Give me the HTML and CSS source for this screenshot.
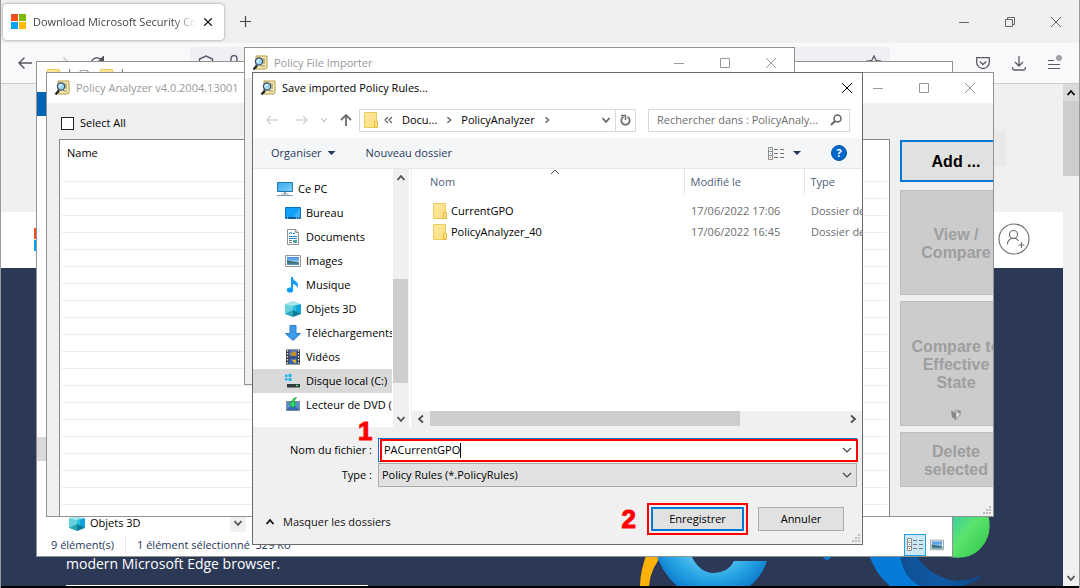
FILE: index.html
```html
<!DOCTYPE html>
<html lang="fr">
<head>
<meta charset="utf-8">
<meta name="viewport" content="width=device-width, initial-scale=1">
<title>Save imported Policy Rules</title>
<link rel="stylesheet" href="styles.css">
</head>
<body>
<svg class="defs" aria-hidden="true">
  <defs>
    <linearGradient id="g-screen" x1="0" y1="0" x2="1" y2="1"><stop offset="0" stop-color="#35a9ee"/><stop offset="1" stop-color="#7fd0fb"/></linearGradient>
    <linearGradient id="g-folder" x1="0" y1="0" x2="1" y2="1"><stop offset="0" stop-color="#ffe9a2"/><stop offset="1" stop-color="#fbdd7c"/></linearGradient>
    <linearGradient id="g-photo" x1="0" y1="0" x2="0" y2="1"><stop offset="0" stop-color="#3f8ee0"/><stop offset="1" stop-color="#d3ecfb"/></linearGradient>
    <symbol id="i-app" viewBox="0 0 16 16">
      <path d="M4 1h11v11q0 2-2 2H4z" fill="#f3eab8" stroke="#b59a3c"/>
      <path d="M10 4h3M11 6h2M11 8h2M9 11h4" stroke="#8a8460"/>
      <path d="M1.500 14.500l3.500-4" stroke="#222" stroke-width="2.200"/>
      <circle cx="7" cy="6.500" r="3.600" fill="#9fd8f5" stroke="#3b4a63" stroke-width="1.200"/>
      <path d="M5.500 7q0-2 2-2.500" stroke="#fff" fill="none"/>
    </symbol>
    <symbol id="i-min" viewBox="0 0 10 10"><path d="M0 5.500h10" stroke="currentColor" fill="none"/></symbol>
    <symbol id="i-max" viewBox="0 0 10 10"><path d="M.5.500h9v9h-9z" stroke="currentColor" fill="none"/></symbol>
    <symbol id="i-close" viewBox="0 0 10 10"><path d="M0 0l10 10M10 0L0 10" stroke="currentColor" fill="none"/></symbol>
    <symbol id="i-folder" viewBox="0 0 14 16"><path d="M.5.500h12v15H.5z" fill="url(#g-folder)" stroke="#ebcb5c"/><path d="M10.500 9.500h3v6h-3z" fill="#fbe08a" stroke="#e3bb3c"/></symbol>
    <symbol id="i-chev-down" viewBox="0 0 10 10"><path d="M1.500 3l3.500 4 3.500-4" stroke="currentColor" stroke-width="1.800" fill="none"/></symbol>
    <symbol id="i-chev-up" viewBox="0 0 10 10"><path d="M1.500 7L5 3l3.500 4" stroke="currentColor" stroke-width="1.800" fill="none"/></symbol>
    <symbol id="i-chev-left" viewBox="0 0 10 10"><path d="M7 1.500L3 5l4 3.500" stroke="currentColor" stroke-width="1.800" fill="none"/></symbol>
    <symbol id="i-chev-right" viewBox="0 0 10 10"><path d="M3 1.500L7 5 3 8.500" stroke="currentColor" stroke-width="1.800" fill="none"/></symbol>
    <symbol id="i-thin-down" viewBox="0 0 10 10"><path d="M1 3l4 4 4-4" stroke="currentColor" stroke-width="1.200" fill="none"/></symbol>
    <symbol id="i-cube" viewBox="0 0 16 16"><path d="M0 3l8-3 8 3-8 2z" fill="#a5e4ec"/><path d="M0 3l8 2v8l-8 0z" fill="#66d0dc"/><path d="M8 5l8-2v10l-8 0z" fill="#0fa3d6"/><path d="M8 5l3-.8V13H8z" fill="#27c3dd"/><path d="M0 13l8-4v7z" fill="#2aa5b5"/><path d="M8 9l8 4-8 3z" fill="#0a7f9c"/></symbol>
    <symbol id="i-pc" viewBox="0 0 16 16"><path d="M.5 1.500h15v9H.5z" fill="url(#g-screen)" stroke="#2377ad"/><path d="M7 11h2v2H7zM4.500 12.500h7v1h-7z" fill="#8ba3b5"/><path d="M0 14.500h16" stroke="#7e99ad"/></symbol>
    <symbol id="i-desk" viewBox="0 0 16 16"><path d="M.5 2.500h15v11H.5z" fill="#12a0fb" stroke="#0872c2"/><path d="M8 13L15 3v9z" fill="#3cb2ff"/><path d="M1 13h14" stroke="#0b5b9b" stroke-width="2"/><path d="M2 13h1M11 13h1M13 13h1" stroke="#fff"/></symbol>
    <symbol id="i-doc" viewBox="0 0 16 16"><path d="M2.500.500h8l3 3v12h-11z" fill="#fff" stroke="#8d9298"/><path d="M10.500.500v3h3" fill="none" stroke="#8d9298"/><path d="M4 5l1.500-2L7 5M8 4.500h2M4 7.500h8M4 9.500h8" stroke="#2888c9" fill="none"/><path d="M4 11.500h3M4 13.500h3" stroke="#777"/><path d="M8 11h4v3H8z" fill="#4fa5a0"/></symbol>
    <symbol id="i-photo" viewBox="0 0 16 16"><path d="M.5 2.500h15v11H.5z" fill="#fff" stroke="#989898"/><path d="M2 4h12v8H2z" fill="url(#g-photo)"/><path d="M2 7l3 1 9 1.500V12H2z" fill="#3b6f73"/><path d="M2 10.500h12V12H2z" fill="#5892b4"/></symbol>
    <symbol id="i-note" viewBox="0 0 16 16"><path d="M6 0h2q0 3 3 4.500 3 2 1.500 6.500-.5-3-4.500-4v6H6z" fill="#109bf5"/><ellipse cx="5" cy="13" rx="3.200" ry="2.600" fill="#109bf5"/></symbol>
    <symbol id="i-down" viewBox="0 0 16 16"><path d="M5 .5h6v8h4.500L8 15.500.5 8.500H5z" fill="#3f9ceb" stroke="#2b7ec8"/></symbol>
    <symbol id="i-film" viewBox="0 0 16 16"><path d="M1 .5h14v15H1z" fill="#383838"/><path d="M4 1h8v6.500H4z" fill="#4573c9"/><path d="M4 8.500h8V15H4z" fill="#345fb4"/><path d="M5 5l3-3 3 1v4H7z" fill="#c58d31"/><path d="M6 10l3 1 2-1v4H9z" fill="#d2a93e"/><path d="M2.500 1v14M13.500 1v14" stroke="#eee" stroke-width="1.400" stroke-dasharray="1.500 1.500"/></symbol>
    <symbol id="i-disk" viewBox="0 0 16 16"><path d="M0 1.500h2.500V4H0zM3.500 1H6.500v3h-3zM0 5h2.500v2.500H0zM3.500 5h3v3h-3z" fill="#17b4ee"/><path d="M4 8h9l2 3H2z" fill="#d9dde0"/><path d="M2 11h13v3.500H2z" fill="#33393c"/><path d="M11 12.500h2" stroke="#51e05b" stroke-width="1.500"/></symbol>
    <symbol id="i-dvd" viewBox="0 0 16 16"><path d="M1.500 4.500h13v9h-13z" fill="#5d93d6" stroke="#7c8b9c"/><path d="M2 12l6-4 6 4v1H2z" fill="#3568b4"/><path d="M11.500.5Q7 1 6.500 6H4l4 5 3.500-5H9q0-3 2.500-5.500z" fill="#2fdc5e" stroke="#169a3b" stroke-width=".7"/></symbol>
    <symbol id="i-list" viewBox="0 0 16 13"><path d="M.5.500h4v12h-4zM.5 4.500h4M.5 8.500h4" fill="#fff" stroke="#8d8d8d"/><path d="M2 2.500h1" stroke="#48a35a"/><path d="M2 6.500h1" stroke="#3a87e0"/><path d="M2 10.500h1" stroke="#e02b2b"/><path d="M6 2.500h4M12 2.500h4M6 6.500h4M12 6.500h4M6 10.500h4M12 10.500h4" stroke="#777"/></symbol>
    <symbol id="i-grip" viewBox="0 0 8 8"><path d="M6 0h2v2H6zM3 3h2v2H3zM6 3h2v2H6zM0 6h2v2H0zM3 6h2v2H3zM6 6h2v2H6z" fill="#bcbcbc"/></symbol>
  </defs>
</svg>
<div class="desktop">
  <div class="browser">
    <header class="tabs">
      <div class="tab">
        <svg width="15" height="15" viewBox="0 0 15 15"><path fill="#f25022" d="M0 0h7v7H0z"/><path fill="#7fba00" d="M8 0h7v7H8z"/><path fill="#00a4ef" d="M0 8h7v7H0z"/><path fill="#ffb900" d="M8 8h7v7H8z"/></svg>
        <span class="tab-title">Download Microsoft Security Co</span>
        <button class="bare" aria-label="Fermer l'onglet"><svg width="8" height="8" viewBox="0 0 8 8"><path d="M0 0l8 8M8 0L0 8" stroke="#222" stroke-width="1.300"/></svg></button>
      </div>
      <button class="bare new-tab" aria-label="Nouvel onglet"><svg width="11" height="11" viewBox="0 0 11 11"><path d="M5.500 0v11M0 5.500h11" stroke="#444" stroke-width="1.200"/></svg></button>
      <div class="controls browser-controls">
        <button aria-label="Réduire"><svg><use href="#i-min"/></svg></button>
        <button aria-label="Restaurer"><svg viewBox="0 0 10 10"><path d="M.5 2.500h7v7h-7zM2.500 2.500v-2h7v7h-2" fill="none" stroke="currentColor"/></svg></button>
        <button aria-label="Fermer"><svg><use href="#i-close"/></svg></button>
      </div>
    </header>
    <nav class="navbar">
      <button class="bare" aria-label="Précédent"><svg width="14" height="12" viewBox="0 0 14 12"><path d="M14 6H1M6.500.5L1 6l5.500 5.500" fill="none" stroke="#555460" stroke-width="1.400"/></svg></button>
      <button class="bare" aria-label="Suivant"><svg width="14" height="12" viewBox="0 0 14 12"><path d="M0 6h13M7.500.5L13 6l-5.500 5.500" fill="none" stroke="#c2c2c8" stroke-width="1.400"/></svg></button>
      <button class="bare reload" aria-label="Actualiser"><svg width="14" height="14" viewBox="0 0 14 14"><path d="M12 4.500A6 6 0 1 0 13 8M13.500.5v5h-5z" fill="#555460" fill-opacity="0" stroke="#555460" stroke-width="1.400"/><path d="M13.800 0v5.500H8.500z" fill="#555460"/></svg></button>
      <div class="url">
        <svg width="16" height="16" viewBox="0 0 16 16"><path d="M8 1l6.500 3v4q0 5-6.500 7-6.500-2-6.500-7V4z" fill="none" stroke="#5b5b66" stroke-width="1.400"/></svg>
        <svg width="10" height="16" viewBox="0 0 10 16"><path d="M2 7V3.500a3 3 0 0 1 6 0V7M1 7.500h8v7H1z" fill="none" stroke="#5b5b66" stroke-width="1.400"/></svg>
        <svg class="star" width="16" height="16" viewBox="0 0 16 16"><path d="M8 1l2.200 4.500 5 .7-3.600 3.500.9 5L8 12.300l-4.500 2.400.9-5L.8 6.200l5-.7z" fill="none" stroke="#5b5b66" stroke-width="1.300"/></svg>
      </div>
      <div class="nav-tools">
        <button class="bare" aria-label="Pocket"><svg width="14" height="14" viewBox="0 0 14 14"><path d="M.7 1.700h12.600v4.500a6.300 6.300 0 0 1-12.600 0zM3.800 5.500L7 8.500l3.200-3" fill="none" stroke="#5b5b66" stroke-width="1.300"/></svg></button>
        <button class="bare" aria-label="Téléchargements"><svg width="14" height="15" viewBox="0 0 14 15"><path d="M7 0v10M3 6l4 4 4-4M.7 11v1.500q0 1.500 1.500 1.500h9.600q1.500 0 1.500-1.500V11" fill="none" stroke="#5b5b66" stroke-width="1.300"/></svg></button>
        <button class="bare" aria-label="Menu"><svg width="14" height="16" viewBox="0 0 14 16"><path d="M0 5.500h6M0 9.500h12M0 13.500h12" fill="none" stroke="#5b5b66" stroke-width="1.200"/><circle cx="11" cy="3" r="3" fill="#a0a0a4"/></svg></button>
      </div>
    </nav>
    <div class="viewport">
      <main class="page">
        <div class="page-top"><span class="page-chip"></span></div>
        <div class="page-head">
          <svg class="ms" width="23" height="23" viewBox="0 0 23 23"><path fill="#f25022" d="M0 0h11v11H0z"/><path fill="#7fba00" d="M12 0h11v11H12z"/><path fill="#00a4ef" d="M0 12h11v11H0z"/><path fill="#ffb900" d="M12 12h11v11H12z"/></svg>
          <a href="#" class="account" aria-label="Se connecter"><svg width="32" height="32" viewBox="0 0 32 32"><g fill="none" stroke="#6b6b6b" stroke-width="1.100"><circle cx="16" cy="16" r="15"/><circle cx="15.500" cy="11.500" r="4"/><path d="M9.500 21.500a6 6 0 0 1 11-3.500M23.500 19v6M20.500 22h6"/></g></svg></a>
        </div>
        <div class="hero">
          <p><a href="#">modern Microsoft Edge browser.</a></p>
          <svg width="370" height="76" viewBox="0 0 370 76">
            <defs>
              <radialGradient id="g-e1" gradientUnits="userSpaceOnUse" cx="82" cy="20" r="70"><stop offset=".45" stop-color="#5ec6f2"/><stop offset=".7" stop-color="#27a5e4"/><stop offset="1" stop-color="#0a74cc"/></radialGradient>
              <linearGradient id="g-e2" x1="0" y1="0" x2="1" y2="0"><stop offset="0" stop-color="#0f4f91"/><stop offset=".5" stop-color="#105aa5"/><stop offset="1" stop-color="#0c4a8c"/></linearGradient>
              <linearGradient id="g-e3" x1="0" y1="0" x2="1" y2="1"><stop offset="0" stop-color="#35c8b0"/><stop offset=".45" stop-color="#5ae46d"/><stop offset="1" stop-color="#2fc244"/></linearGradient>
            </defs>
            <path d="M9 76Q9 61 17 40h18Q19 58 18 76z" fill="#fcb207"/>
            <path d="M24 40h34Q66 63 83 63 98 62 103 51h33q-5 15-17 25H46Q30 62 24 40z" fill="url(#g-e1)"/>
            <path d="M186 42h20l-9 8h-2z" fill="#0b78d6"/>
            <path d="M237 42q7 22 22 34h52L280 42z" fill="#067bd8"/>
            <path d="M269 42h19q8 22 33 28 14 2 28-5 0 5-17 11h-43q-19-10-20-34z" fill="url(#g-e2)"/>
            <path d="M284 42q12 24 38 28 14 2 27-4-14 5-27-1-16-7-20-23z" fill="#2c3956"/>
            <path d="M318 0h38q8 25-8 40-10 10-30 7z" fill="url(#g-e3)"/>
          </svg>
        </div>
      </main>
      <div class="page-scroll"><span class="arrow"><svg><use href="#i-chev-up"/></svg></span><span class="thumb"></span><span class="arrow end"><svg><use href="#i-chev-down"/></svg></span></div>
    </div>
  </div>

  <section class="window explorer" aria-label="Explorateur">
    <div class="explorer-title">
      <svg class="f"><use href="#i-folder"/></svg><i></i><svg class="f"><use href="#i-doc"/></svg><svg class="f"><use href="#i-folder"/></svg><i></i>
      <div class="controls"><button aria-label="Agrandir"><svg><use href="#i-max"/></svg></button><button aria-label="Fermer"><svg><use href="#i-close"/></svg></button></div>
    </div>
    <div class="explorer-ribbon"></div>
    <div class="explorer-body"><span class="sel"></span></div>
    <div class="explorer-item"><svg class="ico"><use href="#i-cube"/></svg><span class="label">Objets 3D</span><span class="arrow"><svg><use href="#i-chev-down"/></svg></span></div>
    <footer class="status"><span>9 élément(s)</span><span class="mid">1 élément sélectionné&nbsp; 329 Ko</span>
      <div class="views"><button class="on" aria-label="Détails"><svg width="16" height="13"><use href="#i-list"/></svg></button><button aria-label="Icônes"><svg width="14" height="14"><use href="#i-photo"/></svg></button></div>
    </footer>
  </section>

  <section class="window analyzer" aria-label="Policy Analyzer">
    <div class="titlebar"><svg class="ico"><use href="#i-app"/></svg><h2>Policy Analyzer v4.0.2004.13001</h2>
      <div class="controls"><button aria-label="Réduire"><svg><use href="#i-min"/></svg></button><button aria-label="Agrandir"><svg><use href="#i-max"/></svg></button><button aria-label="Fermer"><svg><use href="#i-close"/></svg></button></div></div>
    <div class="analyzer-body">
      <div class="left"><label class="check"><input type="checkbox">Select All</label>
        <div class="grid"><div class="grid-head">Name</div><div class="grid-lines"></div></div></div>
      <div class="actions">
        <button class="default">Add ...</button>
        <button class="tall" disabled>View / Compare</button>
        <button class="taller" disabled>Compare to Effective State<svg width="12" height="14" viewBox="0 0 12 14"><path d="M1 3l5-2 5 2v5l-5 5-4-4z" fill="#b9b9b9"/><path d="M1 3l5 2v7L2 9zM7 2l4 1-1 4z" fill="#898989"/><path d="M6 6l4-1-3 4z" fill="#eee"/></svg></button>
        <button class="short" disabled>Delete selected</button>
      </div>
    </div>
    <svg class="grip"><use href="#i-grip"/></svg>
  </section>

  <section class="window importer" aria-label="Policy File Importer">
    <div class="titlebar"><svg class="ico"><use href="#i-app"/></svg><h2>Policy File Importer</h2>
      <div class="controls"><button aria-label="Réduire"><svg><use href="#i-min"/></svg></button><button aria-label="Agrandir"><svg><use href="#i-max"/></svg></button><button aria-label="Fermer"><svg><use href="#i-close"/></svg></button></div></div>
  </section>

  <section class="window dialog" role="dialog" aria-label="Save imported Policy Rules">
    <div class="titlebar"><svg class="ico"><use href="#i-app"/></svg><h1>Save imported Policy Rules...</h1>
      <div class="controls"><button aria-label="Fermer"><svg><use href="#i-close"/></svg></button></div></div>
    <div class="location">
      <button class="bare" aria-label="Précédent"><svg width="12" height="10" viewBox="0 0 12 10"><path d="M12 5H1M5 1L1 5l4 4" fill="none" stroke="#d4d4d4" stroke-width="1.600"/></svg></button>
      <button class="bare" aria-label="Suivant"><svg width="12" height="10" viewBox="0 0 12 10"><path d="M0 5h11M7 1l4 4-4 4" fill="none" stroke="#d4d4d4" stroke-width="1.600"/></svg></button>
      <button class="bare faint" aria-label="Récents"><svg width="8" height="8"><use href="#i-chev-down"/></svg></button>
      <button class="bare" aria-label="Dossier parent"><svg width="12" height="12" viewBox="0 0 12 12"><path d="M6 12V1M1 6l5-5 5 5" fill="none" stroke="#6b6b6b" stroke-width="1.800"/></svg></button>
      <div class="crumbs"><svg width="14" height="16"><use href="#i-folder"/></svg>
        <svg class="laquo" width="9" height="8" viewBox="0 0 9 8"><path d="M4 1L1 4l3 3M8 1L5 4l3 3" fill="none" stroke="#666" stroke-width="1.200"/></svg>
        <a href="#">Docu...</a><svg class="sep" width="8" height="8"><use href="#i-chev-right"/></svg><a href="#">PolicyAnalyzer</a><svg class="sep" width="8" height="8"><use href="#i-chev-right"/></svg>
        <button class="bare drop" aria-label="Emplacements"><svg width="10" height="10"><use href="#i-chev-down"/></svg></button>
        <button class="bare refresh" aria-label="Actualiser"><svg width="11" height="12" viewBox="0 0 11 12"><path d="M3.500 2.800A4.200 4.200 0 1 0 7.500 2.800" fill="none" stroke="#6d6d6d" stroke-width="1.700"/><path d="M1 1.500h4.500V6" fill="none" stroke="#6d6d6d" stroke-width="1.500"/></svg></button>
      </div>
      <div class="search"><input type="text" aria-label="Rechercher" placeholder="Rechercher dans : PolicyAnaly..."><svg width="12" height="12" viewBox="0 0 12 12"><circle cx="7.500" cy="4.500" r="3.500" fill="none" stroke="#666" stroke-width="1.500"/><path d="M5 7l-4 4" stroke="#666" stroke-width="2"/></svg></div>
    </div>
    <div class="toolbar"><button class="bare organise">Organiser <span class="tri"></span></button><button class="bare">Nouveau dossier</button>
      <button class="bare view" aria-label="Affichage"><svg width="16" height="13"><use href="#i-list"/></svg><span class="tri"></span></button><button class="help" aria-label="Aide">?</button></div>
    <div class="panes">
      <ul class="tree">
        <li class="root"><svg class="ico"><use href="#i-pc"/></svg>Ce PC</li>
        <li><svg class="ico"><use href="#i-desk"/></svg>Bureau</li>
        <li><svg class="ico"><use href="#i-doc"/></svg>Documents</li>
        <li><svg class="ico"><use href="#i-photo"/></svg>Images</li>
        <li><svg class="ico"><use href="#i-note"/></svg>Musique</li>
        <li><svg class="ico"><use href="#i-cube"/></svg>Objets 3D</li>
        <li><svg class="ico"><use href="#i-down"/></svg>Téléchargements</li>
        <li><svg class="ico"><use href="#i-film"/></svg>Vidéos</li>
        <li class="selected"><svg class="ico"><use href="#i-disk"/></svg>Disque local (C:)</li>
        <li><svg class="ico"><use href="#i-dvd"/></svg>Lecteur de DVD (D:)</li>
      </ul>
      <div class="vscroll"><span class="arrow"><svg><use href="#i-chev-up"/></svg></span><span class="space"></span><span class="thumb"></span><span class="arrow end"><svg><use href="#i-chev-down"/></svg></span></div>
      <div class="files">
        <svg class="sort" viewBox="0 0 10 10"><path d="M1 7l4-4 4 4" fill="none" stroke="#555"/></svg>
        <table>
          <thead><tr><th class="c1">Nom</th><th class="c2">Modifié le</th><th>Type</th></tr></thead>
          <tbody>
            <tr><td><span class="name"><svg width="14" height="16"><use href="#i-folder"/></svg>CurrentGPO</span></td><td>17/06/2022 17:06</td><td>Dossier de fichiers</td></tr>
            <tr><td><span class="name"><svg width="14" height="16"><use href="#i-folder"/></svg>PolicyAnalyzer_40</span></td><td>17/06/2022 16:45</td><td>Dossier de fichiers</td></tr>
          </tbody>
        </table>
        <div class="hscroll"><span class="arrow"><svg><use href="#i-chev-left"/></svg></span><span class="thumb"></span><span class="arrow"><svg><use href="#i-chev-right"/></svg></span></div>
      </div>
    </div>
    <form class="save">
      <label for="fname">Nom du fichier :</label>
      <div class="combo file"><input id="fname" type="text" value="PACurrentGPO"><span class="caret"></span><svg><use href="#i-thin-down"/></svg><span class="mark-box"></span></div>
      <label for="ftype">Type :</label>
      <div class="combo type"><select id="ftype"><option>Policy Rules (*.PolicyRules)</option></select><svg><use href="#i-thin-down"/></svg></div>
    </form>
    <footer class="buttons">
      <button class="bare hide"><svg><use href="#i-chev-up"/></svg>Masquer les dossiers</button>
      <span class="step">2</span>
      <span class="ring"><button class="push primary">Enregistrer</button></span>
      <button class="push">Annuler</button>
    </footer>
    <svg class="grip"><use href="#i-grip"/></svg>
    <span class="step one">1</span>
  </section>
</div>
</body>
</html>
```
FILE: styles.css
```css
* { box-sizing: border-box; }
body { margin: 0; background: #000; color: #000; font: 11px/16px "Open Sans", "Noto Sans", sans-serif; }
h1, h2, p, ul { margin: 0; padding: 0; font: inherit; }
button, input, select { font: inherit; color: inherit; margin: 0; }
a { color: inherit; text-decoration: none; }
svg { display: block; flex: none; width: 10px; height: 10px; }
svg[width] { width: auto; height: auto; }
.defs { position: absolute; width: 0; height: 0; }
.ico { width: 16px; height: 16px; }
.bare { background: none; border: 0; padding: 0; display: flex; align-items: center; }

.desktop { position: relative; min-height: 588px; height: 100vh; overflow: hidden; }

/* Browser behind the windows */
.browser { height: 100%; display: flex; flex-direction: column; background: #f0f0f0; border: solid #9a9a9a; border-width: 0 1px; }
.tabs { height: 43px; padding: 3px 0 3px 2px; display: flex; align-items: center; }
.tab { width: 221px; height: 36px; padding: 0 12px 0 8px; display: flex; align-items: center; gap: 7px; background: #fff; border-radius: 4px; box-shadow: 0 0 3px #888; color: #444; }
.tab-title { flex: 1; min-width: 0; overflow: hidden; white-space: nowrap; mask-image: linear-gradient(to right, #000 85%, transparent); }
.new-tab { margin-left: 16px; }
.controls { margin-left: auto; display: flex; align-self: stretch; color: #999; }
.controls button { width: 46px; padding: 0; border: 0; background: none; display: flex; align-items: center; justify-content: center; }
.browser-controls { color: #666; }
.navbar { height: 41px; padding: 0 17px; display: flex; align-items: center; gap: 24px; background: #f9f9fb; border-bottom: 1px solid #ccc; }
.reload { margin-left: -4px; }
.url { flex: 1; height: 32px; margin-left: 62px; padding: 0 8px; display: flex; align-items: center; gap: 15px; background: #f0f0f4; border-radius: 4px; }
.star { margin-left: auto; }
.nav-tools { display: flex; align-items: center; gap: 22px; padding-left: 62px; }
.viewport { flex: 1; display: flex; min-height: 0; border-bottom: 2px solid #000; }
.page { flex: 1; display: flex; flex-direction: column; min-width: 0; background: #2c3956; }
.page-top { height: 128px; background: #f0f0f0; display: flex; align-items: center; justify-content: flex-end; padding-right: 57px; }
.page-chip { width: 120px; height: 35px; background: #e9e9e9; border-radius: 2px; }
.page-head { height: 56px; background: #fff; display: flex; align-items: center; justify-content: space-between; padding: 0 33px 2px; }
.hero { flex: 1; display: flex; align-items: flex-end; justify-content: space-between; padding: 0 62px 0 65px; color: #fff; font-size: 14px; line-height: 20px; overflow: hidden; }
.hero p { flex: 0 1 302px; padding-bottom: 11px; border-bottom: 1px solid #fff; }
.page-scroll { width: 16px; display: flex; flex-direction: column; background: #f0f0f0; }
.arrow { display: flex; align-items: center; justify-content: center; width: 16px; height: 17px; color: #505050; background: #f0f0f0; }
.page-scroll .arrow:first-child { background: #dadada; color: #000; }
.page-scroll .thumb { height: 75px; background: #cdcdcd; }
.end { margin-top: auto; }

/* Windows on the desktop */
.window { position: absolute; display: flex; flex-direction: column; overflow: hidden; background: #f0f0f0; border: 1px solid #929292; }
.titlebar { flex: none; height: 30px; padding-left: 7px; display: flex; align-items: center; gap: 6px; background: #fff; color: #999; }
.grip { position: absolute; right: 2px; bottom: 2px; width: 8px; height: 8px; }

.explorer { inset: 61px 127px 31px 36px; background: #fff; }
.explorer-title { height: 30px; padding: 0 0 0 10px; display: flex; align-items: center; gap: 8px; }
.explorer-title .f { width: 14px; height: 16px; }
.explorer-title i { width: 1px; height: 16px; background: #777; }
.explorer-ribbon { width: 60px; height: 24px; background: #0067b8; }
.explorer-body { flex: 1; display: flex; align-items: flex-end; padding-bottom: 52px; }
.sel { width: 120px; height: 24px; background: #d9d9d9; }
.explorer-item { height: 20px; padding-left: 32px; display: flex; align-items: center; gap: 5px; }
.explorer-item .label { width: 135px; }
.status { height: 23px; padding-left: 14px; display: flex; align-items: center; gap: 11px; color: #1e395b; }
.status .mid { padding-left: 11px; border-left: 1px solid #e5e5e5; }
.views { margin-left: auto; display: flex; padding-right: 4px; }
.views button { width: 22px; height: 22px; padding: 0; display: flex; align-items: center; justify-content: center; background: none; border: 1px solid transparent; }
.views .on { background: #cce8f6; border-color: #26a0da; }

.analyzer { inset: 72px 86px 71px 46px; }
.analyzer-body { flex: 1; display: flex; gap: 10px; padding-left: 12px; min-height: 0; }
.left { flex: 1; display: flex; flex-direction: column; }
.check { height: 36px; padding: 4px 0 0 2px; display: flex; align-items: center; gap: 6px; }
.check input { appearance: none; width: 13px; height: 13px; border: 1px solid #222; background: #fff; }
.grid { flex: 1; display: flex; flex-direction: column; background: #fff; border: 1px solid #828790; border-bottom: 0; }
.grid-head { height: 25px; padding: 5px 7px 0; }
.grid-lines { flex: 1; margin: 0 2px; background: repeating-linear-gradient(transparent 0 16px, #ededed 16px 17px); }
.actions { width: 93px; padding-top: 37px; display: flex; flex-direction: column; gap: 6px; }
.actions button { width: 112px; height: 105px; padding: 2px 16px 0; display: flex; flex-direction: column; align-items: center; justify-content: center; background: #ccc; border: 1px solid #bfbfbf; color: #9e9e9e; font: bold 16px/18px "Liberation Sans", Arial, sans-serif; }
.actions .default { height: 42px; margin-bottom: 2px; background: #e1e1e1; border: 2px solid #0078d7; color: #000; }
.actions .taller { height: 125px; padding: 32px 4px 0; }
.actions .taller svg { margin-top: 16px; }
.actions .short { height: 55px; }

.importer { inset: 47px 285px 203px 244px; }

.dialog { inset: 72px 217px 43px 252px; border-color: #6a6a6a; }
.dialog .titlebar { color: #000; }
.dialog .controls { color: #000; }
.dialog .controls button { width: 30px; }
.location { flex: none; height: 35px; padding: 0 12px 1px 13px; display: flex; align-items: center; gap: 18px; background: #fff; }
.faint { color: #ccc; margin: 0 -6px 0 -6px; }
.crumbs { flex: 1; min-width: 0; height: 23px; padding-left: 4px; margin-left: -11px; display: flex; align-items: center; border: 1px solid #d9d9d9; color: #000; }
.crumbs .laquo { margin: 0 9px 0 6px; }
.crumbs .sep { margin: 0 8px; color: #666; }
.drop { margin-left: auto; padding: 0 4px; color: #666; }
.refresh { height: 21px; width: 20px; justify-content: center; border-left: 1px solid #d9d9d9; }
.search { flex: 0 0 202px; height: 23px; margin-left: -6px; padding: 0 7px 0 8px; display: flex; align-items: center; border: 1px solid #d9d9d9; }
.search input { flex: 1; min-width: 0; border: 0; padding: 0; outline: 0; background: none; }
.search input::placeholder { color: #6d6d6d; }
.toolbar { flex: none; height: 31px; padding: 0 15px 0 18px; display: flex; align-items: center; gap: 30px; background: #f5f6f7; border-bottom: 1px solid #e6e8ea; color: #1e395b; }
.tri { width: 8px; height: 4px; margin-left: 6px; background: #1e395b; clip-path: polygon(0 0, 100% 0, 50% 100%); }
.view { margin-left: auto; gap: 3px; }
.help { width: 16px; height: 16px; padding: 0; border: 1px solid #00569c; border-radius: 50%; background: #0066cc; color: #fff; font-weight: bold; line-height: 14px; }
.panes { flex: 1; min-height: 0; display: flex; background: #fff; }
.tree { width: 139px; padding-top: 8px; list-style: none; overflow: hidden; }
.tree li { height: 24px; padding-left: 32px; display: flex; align-items: center; gap: 5px; white-space: nowrap; }
.tree .root { padding-left: 24px; }
.tree .selected { background: #d9d9d9; }
.vscroll { width: 16px; margin-left: 1px; display: flex; flex-direction: column; background: #f0f0f0; }
.vscroll .space { height: 93px; }
.vscroll .thumb { width: 15px; height: 104px; background: #cdcdcd; }
.files { position: relative; flex: 1; min-width: 0; margin-left: 2px; display: flex; flex-direction: column; overflow: hidden; border-left: 1px solid #f0f0f0; }
.sort { position: absolute; left: 138px; top: -2px; }
table { width: 110%; table-layout: fixed; border-collapse: collapse; white-space: nowrap; }
th { height: 25px; padding: 0 0 0 6px; text-align: left; font-weight: normal; color: #4c607a; border-left: 1px solid #e5e5e5; }
.c1 { width: 272px; padding-left: 18px; border-left: 0; }
.c2 { width: 120px; }
td { height: 21px; padding: 0 0 0 7px; color: #6d6d6d; }
thead::after { content: ""; display: block; height: 6px; }
td:first-child { padding-left: 21px; color: #000; }
.name { display: flex; align-items: center; gap: 4px; }
.hscroll { margin-top: auto; height: 16px; display: flex; background: #f0f0f0; }
.hscroll .arrow { height: 16px; width: 18px; }
.hscroll .thumb { width: 310px; height: 15px; background: #cdcdcd; margin-right: auto; }
.save { flex: none; padding: 11px 5px 0 0; display: grid; grid-template-columns: 119px 1fr; grid-auto-rows: 24px; column-gap: 6px; row-gap: 1px; align-items: center; text-align: right; }
.combo { position: relative; height: 24px; padding: 0 4px 0 5px; display: flex; align-items: center; background: #fff; border: 1px solid #0078d7; }
.combo input { field-sizing: content; border: 0; padding: 0; outline: 0; background: none; }
.combo svg { margin-left: auto; color: #444; }
.caret { width: 1px; height: 15px; background: #000; }
.mark-box { position: absolute; inset: 0 -2px -1px 1px; border: 2px solid #f00; }
.type { padding-left: 3px; background: #e1e1e1; border-color: #adadad; }
.type select { flex: 1; appearance: none; border: 0; padding: 0; background: none; outline: 0; }
.buttons { flex: none; padding: 16px 18px 9px 12px; display: flex; align-items: center; }
.hide { gap: 8px; margin-right: auto; padding-top: 6px; color: #111; }
.ring { padding: 2px; border: 2px solid #f00; margin: 0 10px 0 11px; }
.push { width: 86px; height: 24px; padding: 0; background: #e1e1e1; border: 1px solid #adadad; }
.primary { display: block; width: 93px; border: 2px solid #0078d7; }
.step { color: #f00; font: bold 26px/24px "Liberation Sans Narrow", "Liberation Sans", sans-serif; -webkit-text-stroke: 1px #f00; }
.one { position: absolute; left: 105px; bottom: 101px; }
```
